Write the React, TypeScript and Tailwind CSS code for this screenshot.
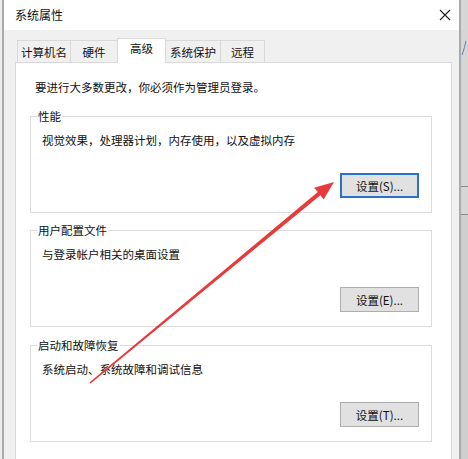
import React from "react";

const tabs = [
  { label: "计算机名", w: "w-[53px]", active: false },
  { label: "硬件", w: "w-[47px]", active: false },
  { label: "高级", w: "w-[49px]", active: true },
  { label: "系统保护", w: "w-[54px]", active: false },
  { label: "远程", w: "w-[45px]", active: false },
];

function Group({
  title,
  desc,
  button,
  focused,
  className,
}: {
  title: string;
  desc: string;
  button: string;
  focused?: boolean;
  className?: string;
}) {
  return (
    <fieldset className={"border border-[#dcdcdc] " + (className ?? "")}>
      <legend className="ml-[6px] px-px leading-4 text-[11.5px]">{title}</legend>
      <div className="flex flex-col pl-[11px] pr-[12px] pt-[8px] pb-[14px]">
        <p className="leading-4 text-[11.5px]">{desc}</p>
        <button
          className={
            "mt-[25px] self-end w-[79px] h-[25px] flex items-center justify-center bg-[#e1e1e1] text-[11.5px] leading-4 " +
            (focused ? "border-2 border-[#2a72c8]" : "border border-[#adadad]")
          }
        >
          {button}
        </button>
      </div>
    </fieldset>
  );
}

export default function App() {
  return (
    <div className="relative flex w-[468px] h-[459px] overflow-hidden bg-[#d4d4d4] text-[#111] font-['Noto_Sans_CJK_SC','Microsoft_YaHei',sans-serif]">
      {/* left edge */}
      <div className="w-[2px] bg-[#ececec]" />

      {/* ================= WINDOW ================= */}
      <div className="w-[459px] shrink-0 flex flex-col border-x-2 border-[#aaaaaa]">
        {/* title bar */}
        <div className="h-[30px] bg-white flex items-center justify-between pl-[11px] pr-[8px]">
          <span className="text-[12px] leading-4">系统属性</span>
          <svg width="12" height="12" viewBox="0 0 12 12">
            <path d="M1 1 L11 11 M11 1 L1 11" stroke="#222" strokeWidth="1.1" fill="none" />
          </svg>
        </div>

        {/* body */}
        <div className="flex-1 flex flex-col bg-[#f0f0f0] pt-[8px] pl-[11px] pr-[7px]">
          {/* tabs */}
          <div className="flex items-end h-[24px] pl-[2px]">
            {tabs.map((t, i) =>
              t.active ? (
                <div
                  key={t.label}
                  className={`${t.w} h-[25px] -mb-px relative z-10 bg-white border border-b-0 border-[#d9d9d9] flex justify-center pt-px text-[11.5px] leading-4`}
                >
                  {t.label}
                </div>
              ) : (
                <div
                  key={t.label}
                  className={`${t.w} h-[22px] border-t border-[#d9d9d9] ${
                    i > 0 && tabs[i - 1].active ? "" : "border-l"
                  } ${i === tabs.length - 1 ? "border-r" : ""} flex items-center justify-center text-[11.5px] leading-4`}
                >
                  {t.label}
                </div>
              )
            )}
          </div>

          {/* panel (continues below the visible area) */}
          <div className="flex-1 -mb-6 bg-white border border-[#d9d9d9] pt-[16px] pl-[14px] pr-[19px]">
            <p className="ml-[5px] text-[11.5px] leading-4">
              要进行大多数更改，你必须作为管理员登录。
            </p>
            <Group
              className="mt-[13px]"
              title="性能"
              desc="视觉效果，处理器计划，内存使用，以及虚拟内存"
              button="设置(S)..."
              focused
            />
            <Group
              className="mt-[9px]"
              title="用户配置文件"
              desc="与登录帐户相关的桌面设置"
              button="设置(E)..."
            />
            <Group
              className="mt-[10px]"
              title="启动和故障恢复"
              desc="系统启动、系统故障和调试信息"
              button="设置(T)..."
            />
          </div>
        </div>
      </div>

      {/* ================= BACKGROUND RIGHT ================= */}
      <div className="flex-1 flex flex-col">
        <div className="h-[186px] bg-[#d6d6d6]">
          <svg width="7" height="16" viewBox="0 0 7 16" className="mt-[40px]">
            <path d="M5 1 C4 5 3 10 1 15" stroke="#5a7fb0" strokeWidth="1" fill="none" />
          </svg>
        </div>
        <div className="h-px bg-[#8c8c8c]" />
        <div className="h-[27px] bg-[#d6d6d6]" />
        <div className="h-px bg-[#8c8c8c]" />
        <div className="flex-1 bg-[#cfcfcf]" />
      </div>

      {/* red arrow annotation */}
      <svg className="absolute inset-0 pointer-events-none" width="468" height="459" viewBox="0 0 468 459">
        <polygon
          points="334,182 323.6,199.4 320.4,195.2 90.6,383.6 89.4,382.4 317.8,191.9 314.2,187.8"
          fill="#e8393b"
        />
      </svg>
    </div>
  );
}
